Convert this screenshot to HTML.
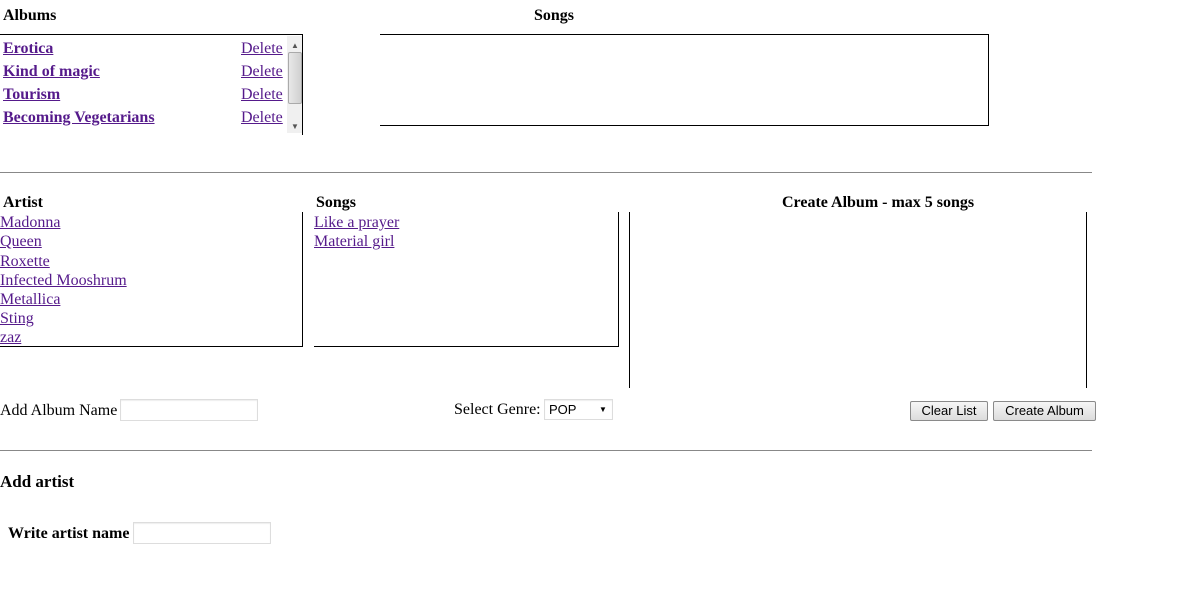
<!DOCTYPE html>
<html><head><meta charset="utf-8"><style>
body{margin:0;width:1194px;height:589px;background:#fff;font-family:"Liberation Serif",serif;font-size:16px;color:#000;position:relative;overflow:hidden}
.a{position:absolute;white-space:nowrap;line-height:18px}
a{color:#551a8b;text-decoration:underline}
b{font-weight:bold}
.btn{position:absolute;font-family:"Liberation Sans",sans-serif;font-size:13px;background:linear-gradient(#f6f6f6,#dcdcdc);border:1px solid #8a8a8a;border-radius:2px;text-align:center;line-height:18px;height:18px}
.inp{position:absolute;border:1px solid #ddd;box-shadow:inset 0 1px 1px #eee;background:#fff}
</style></head><body>
<div class="a" style="left:3px;top:7px"><b>Albums</b></div>
<div class="a" style="left:534px;top:7px"><b>Songs</b></div>
<div class="a" style="left:0;top:34px;width:302px;height:100px;border-top:1px solid #000;border-right:1px solid #000"></div>
<div class="a" style="left:287px;top:36px;width:15px;height:97px;background:#f0f0f0"></div>
<div class="a" style="left:288px;top:52px;width:12px;height:50px;background:linear-gradient(90deg,#e8e8e8,#d0d0d0);border:1px solid #aaa;border-radius:2px"></div>
<div class="a" style="left:291px;top:37px;font-size:8px;color:#555">▲</div>
<div class="a" style="left:291px;top:118px;font-size:8px;color:#555">▼</div>
<div class="a" style="left:3px;top:40px"><a><b>Erotica</b></a></div>
<div class="a" style="left:3px;top:63px"><a><b>Kind of magic</b></a></div>
<div class="a" style="left:3px;top:86px"><a><b>Tourism</b></a></div>
<div class="a" style="left:3px;top:109px"><a><b>Becoming Vegetarians</b></a></div>
<div class="a" style="left:241px;top:40px"><a>Delete</a></div>
<div class="a" style="left:241px;top:63px"><a>Delete</a></div>
<div class="a" style="left:241px;top:86px"><a>Delete</a></div>
<div class="a" style="left:241px;top:109px"><a>Delete</a></div>
<div class="a" style="left:380px;top:34px;width:608px;height:90px;border:1px solid #000;border-left:none"></div>
<div class="a" style="left:0;top:172px;width:1092px;height:0;border-top:1px solid #888"></div>
<div class="a" style="left:3px;top:194px"><b>Artist</b></div>
<div class="a" style="left:316px;top:194px"><b>Songs</b></div>
<div class="a" style="left:782px;top:194px"><b>Create Album - max 5 songs</b></div>
<div class="a" style="left:0;top:212px;width:302px;height:134px;border-right:1px solid #000;border-bottom:1px solid #000"></div>
<div class="a" style="left:314px;top:212px;width:304px;height:134px;border-right:1px solid #000;border-bottom:1px solid #000"></div>
<div class="a" style="left:629px;top:212px;width:456px;height:176px;border-left:1px solid #000;border-right:1px solid #000"></div>
<div class="a" style="left:0;top:214px"><a>Madonna</a></div>
<div class="a" style="left:0;top:233px"><a>Queen</a></div>
<div class="a" style="left:0;top:253px"><a>Roxette</a></div>
<div class="a" style="left:0;top:272px"><a>Infected Mooshrum</a></div>
<div class="a" style="left:0;top:291px"><a>Metallica</a></div>
<div class="a" style="left:0;top:310px"><a>Sting</a></div>
<div class="a" style="left:0;top:329px"><a>zaz</a></div>
<div class="a" style="left:314px;top:214px"><a>Like a prayer</a></div>
<div class="a" style="left:314px;top:233px"><a>Material girl</a></div>
<div class="a" style="left:0;top:402px">Add Album Name</div>
<div class="inp" style="left:120px;top:399px;width:136px;height:20px"></div>
<div class="a" style="left:454px;top:401px">Select Genre:</div>
<div class="inp" style="left:544px;top:399px;width:67px;height:19px;font-family:'Liberation Sans',sans-serif;font-size:13px;line-height:19px"><span style="padding-left:4px">POP</span><span style="position:absolute;left:54px;top:0;font-size:8px">▼</span></div>
<div class="btn" style="left:910px;top:401px;width:76px">Clear List</div>
<div class="btn" style="left:993px;top:401px;width:101px">Create Album</div>
<div class="a" style="left:0;top:450px;width:1092px;height:0;border-top:1px solid #888"></div>
<div class="a" style="left:0;top:473px;font-size:17px"><b>Add artist</b></div>
<div class="a" style="left:8px;top:525px"><b>Write artist name</b></div>
<div class="inp" style="left:133px;top:522px;width:136px;height:20px"></div>
</body></html>
